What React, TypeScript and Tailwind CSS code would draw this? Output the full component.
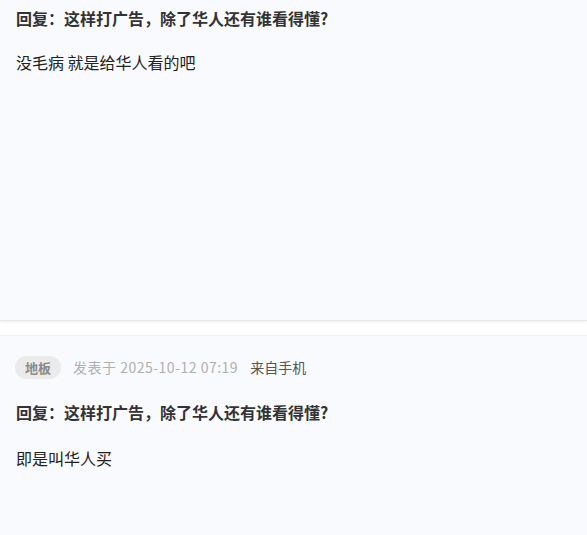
export default function App() {
  const font = { fontFamily: '"Noto Sans CJK SC", "Noto Sans", sans-serif' }
  return (
    <div className="w-[587px] h-[535px] overflow-hidden bg-white" style={font}>
      <section className="h-[321px] bg-[#f9fafd] px-4 pt-[7px] shadow-[0_1px_3px_rgba(0,0,0,0.08)] border-b border-[#e8e8eb]">
        <h2 className="text-[16px] leading-[22px] font-bold text-[#333]">回复：这样打广告，除了华人还有谁看得懂?</h2>
        <p className="mt-[22px] text-[16px] leading-[22px] text-[#222]">没毛病 就是给华人看的吧</p>
      </section>
      <section className="mt-[14px] h-[200px] bg-[#f9fafd] border-t border-[#eef0f3] px-[15px] pt-5">
        <div className="flex items-center h-[23px]">
          <span className="h-[23px] px-[10px] rounded-full bg-[#ebebeb] text-[13px] leading-[23px] font-bold text-[#8a8a8a]">地板</span>
          <span className="ml-3 text-[14px] tracking-[0.5px] text-[#b0b0b0]">发表于 2025-10-12 07:19</span>
          <span className="ml-3 text-[14px] text-[#555]">来自手机</span>
        </div>
        <h2 className="mt-[22px] ml-px text-[16px] leading-[22px] font-bold text-[#333]">回复：这样打广告，除了华人还有谁看得懂?</h2>
        <p className="mt-[24px] ml-px text-[16px] leading-[22px] text-[#222]">即是叫华人买</p>
      </section>
    </div>
  )
}
